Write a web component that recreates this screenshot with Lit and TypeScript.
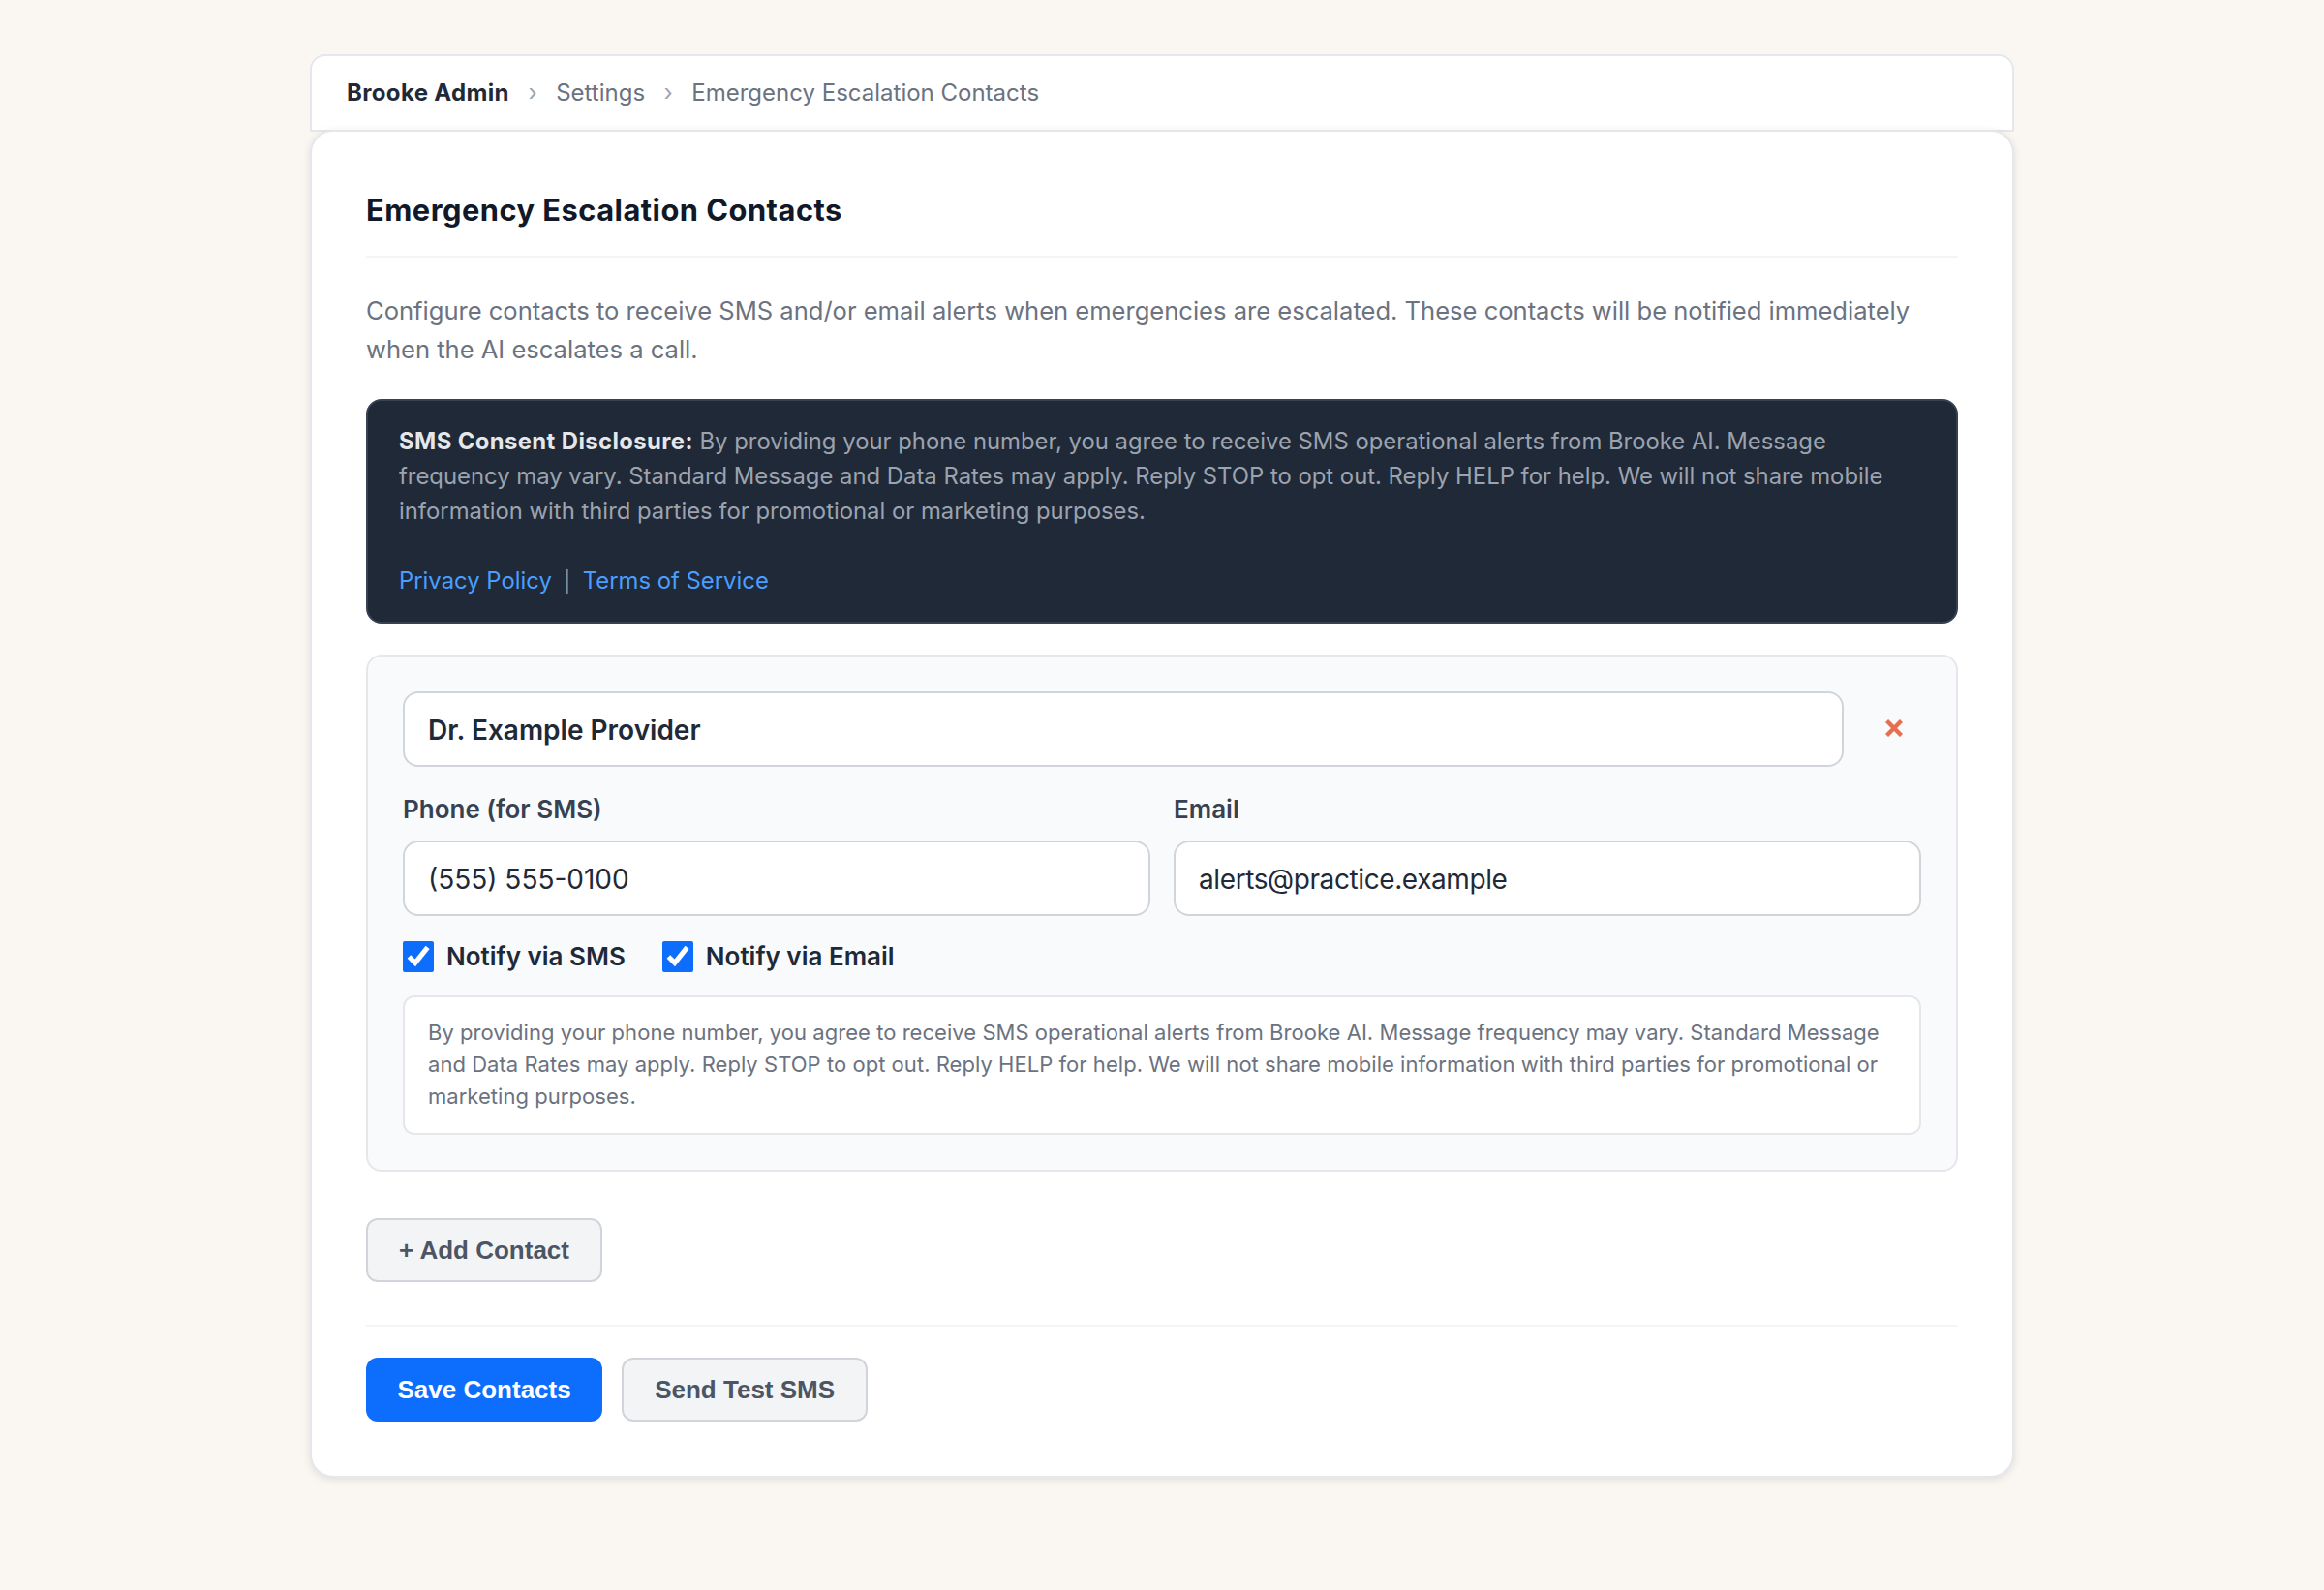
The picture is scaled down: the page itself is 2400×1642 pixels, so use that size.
import { LitElement, html, css } from "lit";
import { customElement } from "lit/decorators.js";

@customElement("app-root")
export class AppRoot extends LitElement {
  static styles = css`
    :host {
      display: block;
      min-height: 1642px;
      background: #faf7f2;
      font-family: Inter, "Liberation Sans", sans-serif;
      color: #1f2937;
    }
    * { box-sizing: border-box; }
    .page { width: 1760px; margin: 0 auto; padding: 56px 0; }
    .crumbs {
      height: 80px;
      display: flex;
      align-items: center;
      padding: 0 36px 2px;
      background: #fff;
      border: 2px solid #e5e7eb;
      border-radius: 16px 16px 0 0;
      font-size: 24px;
      color: #6b7280;
    }
    .crumbs strong { color: #1f2937; font-weight: 700; letter-spacing: 0.35px; }
    .crumbs .sep { color: #9ca3af; margin: 0 19.5px; }
    .card {
      position: relative;
      margin-top: -2px;
      background: #fff;
      border: 2px solid #e5e7eb;
      border-radius: 24px;
      padding: 56px;
      box-shadow: 0 2px 8px rgba(0, 0, 0, 0.1);
    }
    h2 {
      margin: 0 0 35px;
      font-size: 30.8px;
      line-height: 50px;
      font-weight: 700;
      letter-spacing: 0.5px;
      color: #111827;
      padding-bottom: 22px;
      border-bottom: 2px solid #f3f4f6;
    }
    .intro { margin: 0 0 31px; font-size: 25.56px; line-height: 40px; color: #6b7280; }
    .disclosure {
      background: #1f2937;
      border: 2px solid #374151;
      border-radius: 16px;
      padding: 24px 32px;
      font-size: 23.85px;
      line-height: 36px;
      color: #9ca3af;
      margin-bottom: 32px;
    }
    .disclosure strong { color: #e5e7eb; font-weight: 700; letter-spacing: 0.4px; }
    .disclosure a { color: #4a9eff; text-decoration: none; }
    .disclosure .bar { margin: 0 12.5px; font-size: 21px; line-height: 1; color: #8b93a0; }
    .contact {
      background: #f9fafb;
      border: 2px solid #e5e7eb;
      border-radius: 16px;
      padding: 36px;
      margin-bottom: 48px;
    }
    .name-row { display: flex; align-items: center; gap: 24px; margin-bottom: 24px; }
    input.text {
      display: block;
      width: 100%;
      height: 78px;
      padding: 2px 24px 0;
      border: 2px solid #d1d5db;
      border-radius: 16px;
      background: #fff;
      font: 400 28px Inter, sans-serif;
      color: #1f2937;
      outline: none;
    }
    input.name { font-weight: 600; flex: 1; min-width: 0; }
    input.email { letter-spacing: -0.4px; }
    .remove {
      width: 56px;
      height: 57px;
      padding: 0 0 3px;
      flex: none;
      background: none;
      border: 0;
      display: flex;
      align-items: center;
      justify-content: center;
    }
    .remove svg { width: 18px; height: 18px; display: block; }
    .fields { display: grid; grid-template-columns: 1fr 1fr; gap: 24px; margin-bottom: 26px; }
    label.field { display: block; font-size: 26px; line-height: 40px; font-weight: 600; color: #374151; }
    label.field span { display: block; margin-bottom: 12px; }
    .checks { display: flex; gap: 38px; margin-bottom: 24px; }
    .check { display: flex; align-items: center; gap: 13px; font-size: 26px; line-height: 32px; font-weight: 600; color: #1f2937; }
    .check input { width: 32px; height: 32px; margin: 0; accent-color: #0d6efd; }
    .hint {
      background: #fff;
      border: 2px solid #e5e7eb;
      border-radius: 12px;
      padding: 20px 24px 21px;
      font-size: 22px;
      line-height: 33px;
      letter-spacing: 0.04px;
      color: #6b7280;
    }
    button.btn {
      height: 66px;
      padding: 0 32px;
      border-radius: 12px;
      font: 700 26px "Liberation Sans", Arial, sans-serif;
      border: 2px solid #d1d5db;
      background: #f3f4f6;
      color: #4b5563;
    }
    button.primary { background: #0d6efd; border: 0; color: #fff; padding: 0 32.5px; }
    .actions {
      margin-top: 44px;
      padding-top: 32px;
      border-top: 2px solid #f3f4f6;
      display: flex;
      gap: 20px;
    }
  `;

  render() {
    return html`
      <div class="page">
        <nav class="crumbs">
          <strong>Brooke Admin</strong><span class="sep">›</span><span>Settings</span><span class="sep">›</span><span>Emergency Escalation Contacts</span>
        </nav>
        <main class="card">
          <h2>Emergency Escalation Contacts</h2>
          <p class="intro">Configure contacts to receive SMS and/or email alerts when emergencies are escalated. These contacts will be notified immediately when the AI escalates a call.</p>
          <div class="disclosure">
            <strong>SMS Consent Disclosure:</strong> By providing your phone number, you agree to receive SMS operational alerts from Brooke AI. Message frequency may vary. Standard Message and Data Rates may apply. Reply STOP to opt out. Reply HELP for help. We will not share mobile information with third parties for promotional or marketing purposes.<br /><br />
            <a href="#">Privacy Policy</a><span class="bar">|</span><a href="#">Terms of Service</a>
          </div>
          <section class="contact">
            <div class="name-row">
              <input class="text name" .value=${"Dr. Example Provider"} />
              <button class="remove" aria-label="Remove">
                <svg viewBox="0 0 18 18"><path d="M1.5 1.5 16.5 16.5M16.5 1.5 1.5 16.5" stroke="#e76f51" stroke-width="4.4" fill="none" /></svg>
              </button>
            </div>
            <div class="fields">
              <label class="field"><span>Phone (for SMS)</span><input class="text" .value=${"(555) 555-0100"} /></label>
              <label class="field"><span>Email</span><input class="text email" .value=${"alerts@practice.example"} /></label>
            </div>
            <div class="checks">
              <label class="check"><input type="checkbox" checked />Notify via SMS</label>
              <label class="check"><input type="checkbox" checked />Notify via Email</label>
            </div>
            <div class="hint">By providing your phone number, you agree to receive SMS operational alerts from Brooke AI. Message frequency may vary. Standard Message and Data Rates may apply. Reply STOP to opt out. Reply HELP for help. We will not share mobile information with third parties for promotional or marketing purposes.</div>
          </section>
          <button class="btn">+ Add Contact</button>
          <div class="actions">
            <button class="btn primary">Save Contacts</button>
            <button class="btn">Send Test SMS</button>
          </div>
        </main>
      </div>
    `;
  }
}
